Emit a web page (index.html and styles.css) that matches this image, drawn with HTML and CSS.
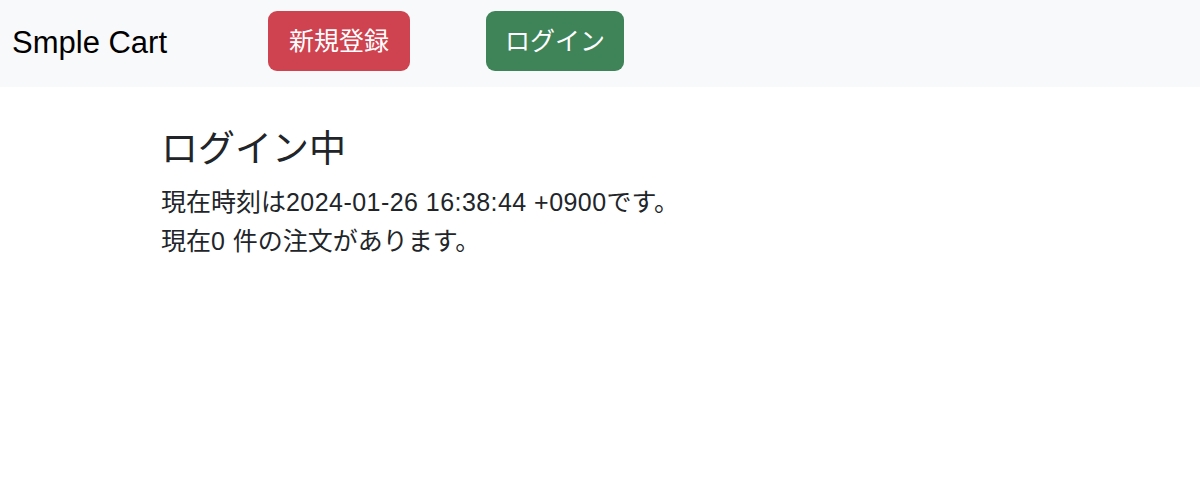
FILE: index.html
```html
<!DOCTYPE html>
<html lang="ja">
<head>
<meta charset="utf-8">
<link rel="stylesheet" href="styles.css">
</head>
<body>
<nav class="navbar">
  <a class="brand" href="#">Smple Cart</a>
  <a class="btn btn-red" href="#">新規登録</a>
  <a class="btn btn-green" href="#">ログイン</a>
</nav>
<main class="content">
  <h4 class="title">ログイン中</h4>
  <p class="text">現在時刻は<span class="num">2024-01-26 16:38:44 +0900</span>です。<br>現在<span class="num">0 </span>件の注文があります。</p>
</main>
</body>
</html>
```
FILE: styles.css
```css
html, body {
  margin: 0;
  padding: 0;
  background: #ffffff;
}
body {
  font-family: "Liberation Sans", "Noto Sans CJK JP", sans-serif;
  color: #212529;
  font-size: 25px;
  line-height: 1.5;
}
.navbar {
  display: flex;
  align-items: flex-start;
  height: 87px;
  background: #f8f9fa;
  padding: 11px 0 0 12px;
  box-sizing: border-box;
}
.brand {
  font-size: 31px;
  color: #000;
  text-decoration: none;
  line-height: 40px;
  margin-top: 12px;
  width: 256px;
}
.btn {
  display: inline-flex;
  align-items: center;
  justify-content: center;
  height: 60px;
  box-sizing: border-box;
  padding: 0 18px;
  border-radius: 9px;
  color: #fff;
  text-decoration: none;
  font-size: 25px;
  line-height: 1;
}
.btn-red {
  background: #cf4350;
  width: 142px;
}
.btn-green {
  background: #3e8458;
  width: 138px;
  margin-left: 76px;
}
.content {
  padding: 0 0 0 161px;
}
.title {
  margin: 0;
  padding-top: 41px;
  font-size: 37px;
  font-weight: 400;
  line-height: 1.2;
}
.text {
  margin: 11px 0 0;
  font-size: 25px;
  line-height: 39px;
}
.num {
  letter-spacing: 0.45px;
}
```
